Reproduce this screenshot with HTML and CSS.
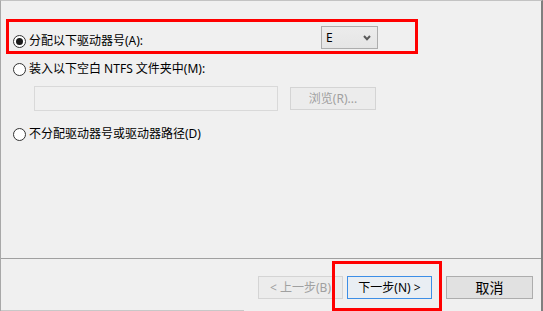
FILE: index.html
```html
<!DOCTYPE html>
<html lang="zh-CN">
<head>
<meta charset="utf-8">
<title>分配驱动器号和路径</title>
<link rel="stylesheet" href="styles.css">
</head>
<body>
<div class="window">
  <div class="main">
    <div class="row row-1">
      <label class="opt opt-wide"><span class="radio checked"></span><span>分配以下驱动器号(A):</span></label>
      <div class="combo"><span class="combo-value">E</span>
        <svg class="chev" width="8" height="6" viewBox="0 0 8 6"><polyline points="1,1 4,4.2 7,1" fill="none" stroke="#5a5a5a" stroke-width="2"/></svg>
      </div>
    </div>
    <div class="row row-2">
      <label class="opt"><span class="radio"></span><span>装入以下空白 NTFS 文件夹中(M):</span></label>
    </div>
    <div class="row row-3">
      <div class="path-input"></div>
      <div class="btn btn-browse disabled">浏览(R)...</div>
    </div>
    <div class="row row-4">
      <label class="opt"><span class="radio"></span><span>不分配驱动器号或驱动器路径(D)</span></label>
    </div>
  </div>
  <div class="footer">
    <div class="btn btn-back disabled">&lt; 上一步(B)</div>
    <div class="btn btn-next">下一步(N) &gt;</div>
    <div class="btn btn-cancel">取消</div>
  </div>
  <div class="bottom-line"></div>
  <div class="mark mark-1"></div>
  <div class="mark mark-2"></div>
</div>
</body>
</html>
```
FILE: styles.css
```css
* { box-sizing: border-box; }
html, body { margin: 0; padding: 0; background: #f0f0f0; }
body {
  font-family: "Noto Sans", "Noto Sans CJK SC", sans-serif;
  font-size: 12px;
  color: #000;
}
.window {
  position: relative;
  width: 543px;
  height: 311px;
  background: #f0f0f0;
  border-top: 1px solid #c3c3c3;
  border-left: 1px solid #a8a8a8;
  border-right: 2px solid #7f7f7f;
  overflow: hidden;
}
.main {
  height: 258px;
  padding: 25px 0 0 11px;
  border-bottom: 1px solid #a0a0a0;
}
.row { display: flex; }
.row-1 { height: 23px; align-items: flex-end; }
.row-2 { margin-top: 12px; }
.row-3 { margin-top: 9px; height: 25px; align-items: center; }
.row-4 { margin-top: 15px; }
.opt {
  display: flex;
  align-items: center;
  height: 16px;
  line-height: 16px;
  white-space: nowrap;
}
.opt-wide { width: 309px; }
.radio {
  width: 13px;
  height: 13px;
  border: 1px solid #333;
  border-radius: 50%;
  background: #fff;
  margin: 0 3px 0 1px;
  display: flex;
  align-items: center;
  justify-content: center;
  flex: none;
}
.radio.checked::after {
  content: "";
  width: 7px;
  height: 7px;
  border-radius: 50%;
  background: #1a1a1a;
}
.combo {
  width: 57px;
  height: 23px;
  border: 1px solid #adadad;
  background: linear-gradient(#ececec, #e5e5e5);
  display: flex;
  align-items: center;
  justify-content: space-between;
  padding: 0 6px 0 4px;
  line-height: 16px;
}
.chev { display: block; }
.path-input {
  margin-left: 22px;
  width: 244px;
  height: 25px;
  border: 1px solid #d9d9d9;
  background: #f0f0f0;
}
.btn {
  height: 23px;
  border: 1px solid #adadad;
  background: #e1e1e1;
  display: flex;
  align-items: center;
  justify-content: center;
  white-space: nowrap;
  line-height: 16px;
}
.btn.disabled {
  color: #a0a0a0;
  border-color: #d4d4d4;
  background: #ececec;
}
.btn-browse { width: 86px; margin-left: 12px; }
.footer {
  height: 51px;
  display: flex;
  align-items: flex-start;
  justify-content: flex-end;
  padding: 17px 8px 0 0;
}
.btn-back { width: 85px; }
.btn-next {
  width: 85px;
  margin-left: 4px;
  border-color: #3d8ee6;
  background: #e9eef3;
}
.btn-cancel {
  width: 87px;
  margin-left: 14px;
  font-size: 14px;
}
.bottom-line {
  width: 243px;
  height: 1px;
  background: #c8c8c8;
}
.mark {
  position: absolute;
  border: 3px solid #ff0000;
}
.mark-1 { left: 5px; top: 18px; width: 412px; height: 35px; }
.mark-2 { left: 331px; top: 260px; width: 110px; height: 50px; }
```
